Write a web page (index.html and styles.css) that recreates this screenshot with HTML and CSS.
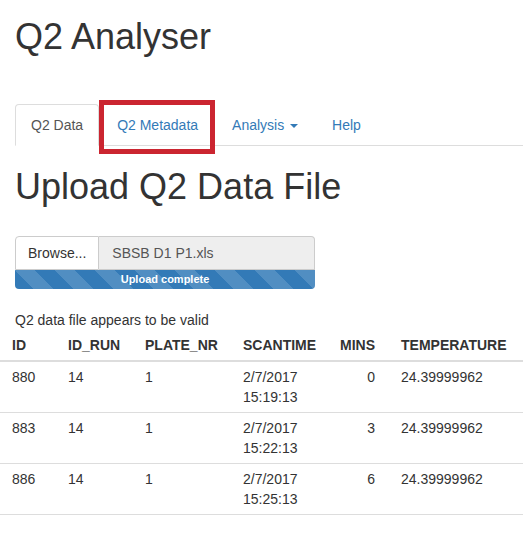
FILE: index.html
```html
<!DOCTYPE html>
<html>
<head>
<meta charset="utf-8">
<title>Q2 Analyser</title>
<link rel="stylesheet" href="styles.css">
</head>
<body>
<div class="page">
  <h1 class="title">Q2 Analyser</h1>
  <ul class="nav-tabs">
    <li class="active"><a>Q2 Data</a></li>
    <li class="marked"><a>Q2 Metadata</a><span class="highlight"></span></li>
    <li><a>Analysis <b class="caret"></b></a></li>
    <li><a>Help</a></li>
  </ul>
  <h1 class="heading">Upload Q2 Data File</h1>
  <div class="file-input">
    <div class="input-group">
      <span class="btn">Browse...</span>
      <span class="file-name">SBSB D1 P1.xls</span>
    </div>
    <div class="progress"><div class="progress-bar">Upload complete</div></div>
  </div>
  <div class="message">Q2 data file appears to be valid</div>
  <div class="table-wrap">
    <table class="data-table">
      <colgroup>
        <col class="c-id"><col class="c-run"><col class="c-plate"><col class="c-scan"><col class="c-mins"><col class="c-temp">
      </colgroup>
      <thead>
        <tr><th class="first">ID</th><th>ID_RUN</th><th>PLATE_NR</th><th>SCANTIME</th><th class="num">MINS</th><th>TEMPERATURE</th></tr>
      </thead>
      <tbody>
        <tr><td class="first">880</td><td>14</td><td>1</td><td>2/7/2017 15:19:13</td><td class="num">0</td><td>24.39999962</td></tr>
        <tr><td class="first">883</td><td>14</td><td>1</td><td>2/7/2017 15:22:13</td><td class="num">3</td><td>24.39999962</td></tr>
        <tr><td class="first">886</td><td>14</td><td>1</td><td>2/7/2017 15:25:13</td><td class="num">6</td><td>24.39999962</td></tr>
      </tbody>
    </table>
  </div>
</div>
</body>
</html>
```
FILE: styles.css
```css
html, body {
  margin: 0;
  padding: 0;
  background: #fff;
}
body {
  font-family: "Liberation Sans", Arial, Helvetica, sans-serif;
  font-size: 14px;
  line-height: 20px;
  color: #333;
  overflow: hidden;
}
.page {
  padding-left: 15px;
}
.title, .heading {
  font-size: 36px;
  font-weight: 500;
  line-height: 40px;
  margin: 0;
}
.title {
  margin-top: 17px;
  margin-bottom: 47px;
}
.heading {
  margin-top: 21px;
}
.nav-tabs {
  list-style: none;
  display: flex;
  margin: 0;
  padding: 0;
  border-bottom: 1px solid #ddd;
}
.nav-tabs li {
  position: relative;
  margin-bottom: -1px;
  margin-right: 2px;
}
.nav-tabs a {
  display: block;
  padding: 10px 15px;
  border: 1px solid transparent;
  border-radius: 4px 4px 0 0;
  color: #337ab7;
  line-height: 20px;
}
.nav-tabs .active a {
  color: #555;
  background: #fff;
  border-color: #ddd #ddd transparent;
}
.caret {
  display: inline-block;
  width: 0;
  height: 0;
  margin-left: 2px;
  vertical-align: middle;
  border-top: 4px solid;
  border-left: 4px solid transparent;
  border-right: 4px solid transparent;
}
.highlight {
  position: absolute;
  left: -2px;
  top: -4px;
  width: 116px;
  height: 54px;
  box-sizing: border-box;
  border: 5px solid #cb2530;
}
.file-input {
  width: 300px;
  margin-top: 29px;
}
.input-group {
  display: flex;
  height: 34px;
}
.btn {
  box-sizing: border-box;
  height: 34px;
  padding: 6px 12px;
  background: #fff;
  border: 1px solid #ccc;
  border-radius: 4px 0 0 0;
  color: #333;
}
.file-name {
  flex: 1;
  box-sizing: border-box;
  height: 34px;
  padding: 6px 13px;
  background: #eee;
  border: 1px solid #ccc;
  border-left: 0;
  border-radius: 0 4px 0 0;
  color: #555;
}
.progress {
  height: 19px;
  border-radius: 0 0 4px 4px;
  overflow: hidden;
  background: #f5f5f5;
}
.progress-bar {
  height: 100%;
  background-color: #337ab7;
  background-image: linear-gradient(45deg, rgba(255,255,255,.15) 25%, transparent 25%, transparent 50%, rgba(255,255,255,.15) 50%, rgba(255,255,255,.15) 75%, transparent 75%, transparent);
  background-size: 40px 40px;
  color: #fff;
  font-size: 11px;
  font-weight: bold;
  line-height: 19px;
  text-align: center;
}
.message {
  margin-top: 21px;
}
.table-wrap {
  margin-left: -15px;
}
.data-table {
  width: 523px;
  table-layout: fixed;
  border-collapse: collapse;
}
.c-id { width: 63px; }
.c-run { width: 77px; }
.c-plate { width: 98px; }
.c-scan { width: 87px; }
.c-mins { width: 71px; }
.data-table th, .data-table td {
  padding: 5px;
  text-align: left;
  vertical-align: top;
  line-height: 20px;
}
.data-table th {
  font-weight: bold;
  border-bottom: 2px solid #ddd;
}
.data-table td {
  border-bottom: 1px solid #ddd;
}
.data-table .first {
  padding-left: 12px;
}
.data-table .num {
  text-align: right;
  padding-right: 21px;
}
```
